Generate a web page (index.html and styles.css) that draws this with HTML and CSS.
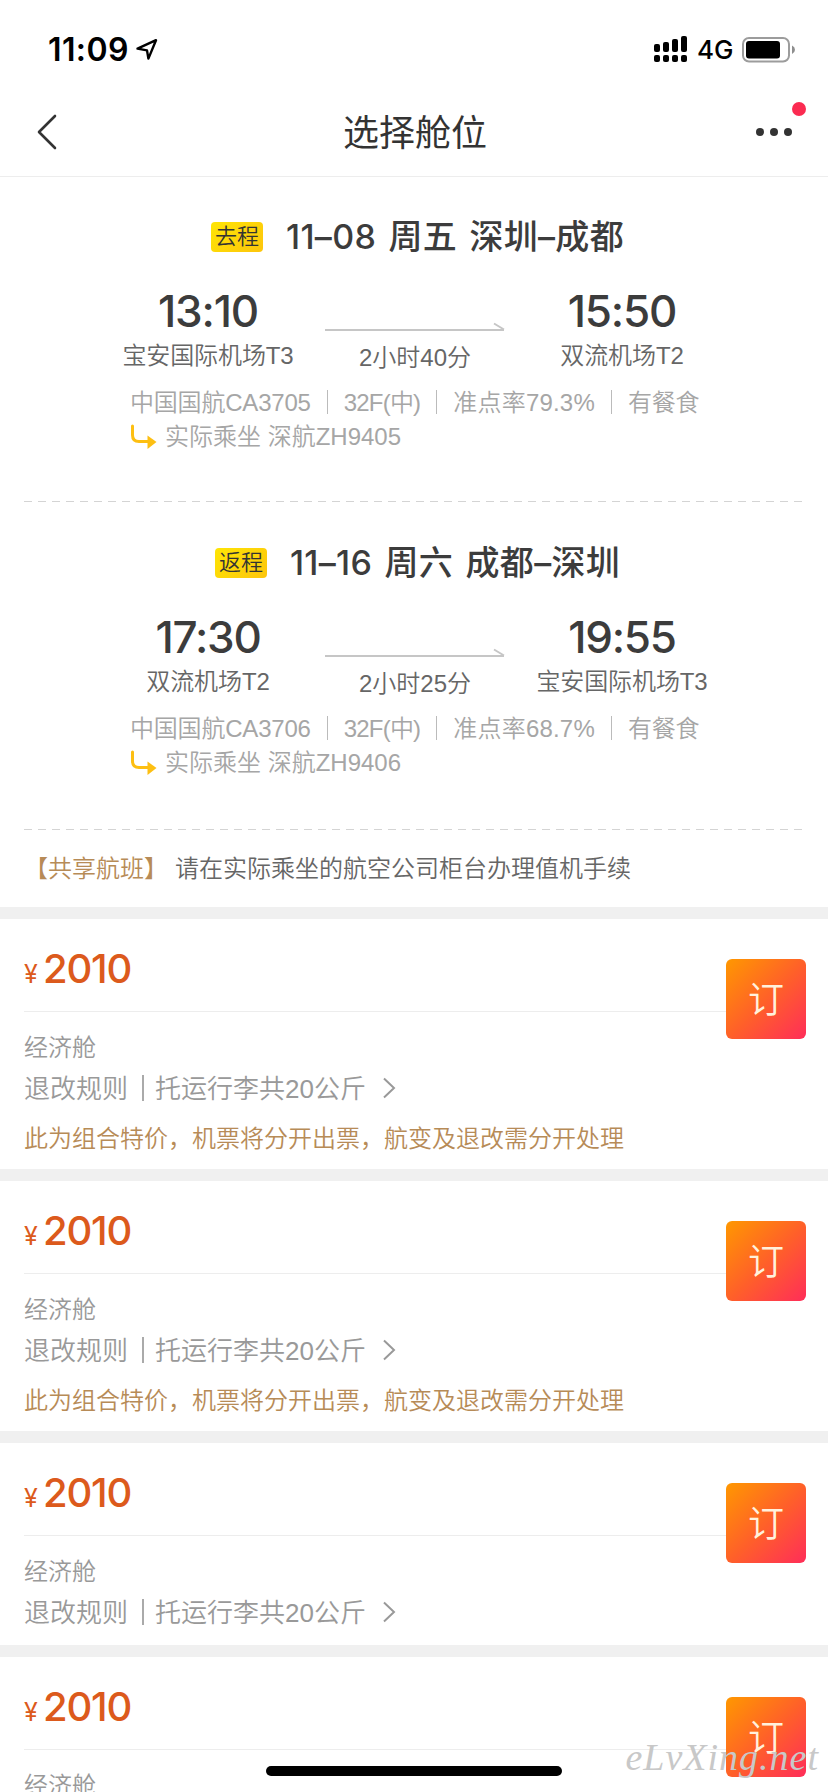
FILE: index.html
```
<!DOCTYPE html>
<html lang="zh-CN">
<head>
  <meta charset="UTF-8">
  <title>选择舱位</title>
  <link rel="stylesheet" href="styles.css">
</head>
<body>

  <div class="status-bar">
    <span class="clock">11:09</span>
    <svg class="location" width="24" height="24" viewBox="0 0 24 24">
      <path d="M2.5 10.6 L21 2.2 L13.4 20.6 L12 12.4 Z" fill="none" stroke="#000" stroke-width="2.4" stroke-linejoin="round"/>
    </svg>
    <div class="status-right">
      <svg width="34" height="27" viewBox="0 0 34 27">
        <rect x="0" y="8" width="6" height="8" rx="2"/>
        <rect x="9" y="6" width="6" height="10" rx="2"/>
        <rect x="18" y="3" width="6" height="13" rx="2"/>
        <rect x="27" y="0" width="6" height="16" rx="2"/>
        <rect x="0" y="19" width="6" height="7" rx="2"/>
        <rect x="9" y="19" width="6" height="7" rx="2"/>
        <rect x="18" y="19" width="6" height="7" rx="2"/>
        <rect x="27" y="19" width="6" height="7" rx="2"/>
      </svg>
      <span class="network">4G</span>
      <svg width="54" height="26" viewBox="0 0 54 26">
        <rect x="1" y="1" width="46" height="23.5" rx="6" fill="none" stroke="#9c9c9c" stroke-width="2"/>
        <rect x="4" y="4" width="34" height="17.5" rx="3"/>
        <path d="M50 8.5 Q53 10 53 12.7 Q53 15.5 50 17 Z" fill="#8e8e8e"/>
      </svg>
    </div>
  </div>

  <div class="nav">
    <svg class="back" width="22" height="36" viewBox="0 0 22 36">
      <path d="M19 2 L3 18 L19 34" fill="none" stroke="#333" stroke-width="2.6" stroke-linecap="round" stroke-linejoin="round"/>
    </svg>
    <h1>选择舱位</h1>
    <div class="more">
      <i></i><i></i><i></i>
      <span class="badge-dot"></span>
    </div>
  </div>

  <div class="flight">
    <div class="flight-title">
      <span class="tag">去程</span>
      <h2>11–08 周五 深圳–成都</h2>
    </div>
    <div class="route">
      <div class="stop">
        <div class="time">13:10</div>
        <div class="airport">宝安国际机场T3</div>
      </div>
      <div class="duration">
        <svg width="180" height="10" viewBox="0 0 180 10">
          <path d="M0 8 H179 M169 1.5 L179 7.5" fill="none" stroke="#c6c6c6" stroke-width="2"/>
        </svg>
        <span>2小时40分</span>
      </div>
      <div class="stop">
        <div class="time">15:50</div>
        <div class="airport">双流机场T2</div>
      </div>
    </div>
    <div class="info">
      <span>中国国航CA3705</span><i></i><span class="model">32F(中)</span><i></i><span class="rate">准点率79.3%</span><i></i><span>有餐食</span>
    </div>
    <div class="actual">
      <svg width="28" height="26" viewBox="0 0 28 26">
        <path d="M2.5 2 V11 Q2.5 17.5 9 17.5 H18" fill="none" stroke="#fdbf12" stroke-width="3" stroke-linecap="round"/>
        <path d="M17.5 11.5 L26.5 18 L17.5 25 Z" fill="#fdbf12"/>
      </svg>
      <span>实际乘坐 深航ZH9405</span>
    </div>
  </div>

  <div class="dashed"></div>

  <div class="flight return">
    <div class="flight-title">
      <span class="tag">返程</span>
      <h2>11–16 周六 成都–深圳</h2>
    </div>
    <div class="route">
      <div class="stop">
        <div class="time">17:30</div>
        <div class="airport">双流机场T2</div>
      </div>
      <div class="duration">
        <svg width="180" height="10" viewBox="0 0 180 10">
          <path d="M0 8 H179 M169 1.5 L179 7.5" fill="none" stroke="#c6c6c6" stroke-width="2"/>
        </svg>
        <span>2小时25分</span>
      </div>
      <div class="stop">
        <div class="time">19:55</div>
        <div class="airport">宝安国际机场T3</div>
      </div>
    </div>
    <div class="info">
      <span>中国国航CA3706</span><i></i><span class="model">32F(中)</span><i></i><span class="rate">准点率68.7%</span><i></i><span>有餐食</span>
    </div>
    <div class="actual">
      <svg width="28" height="26" viewBox="0 0 28 26">
        <path d="M2.5 2 V11 Q2.5 17.5 9 17.5 H18" fill="none" stroke="#fdbf12" stroke-width="3" stroke-linecap="round"/>
        <path d="M17.5 11.5 L26.5 18 L17.5 25 Z" fill="#fdbf12"/>
      </svg>
      <span>实际乘坐 深航ZH9406</span>
    </div>
  </div>

  <div class="dashed"></div>

  <div class="notice"><b>【共享航班】</b><span>请在实际乘坐的航空公司柜台办理值机手续</span></div>

  <div class="card">
    <div class="price"><small>¥</small>2010</div>
    <div class="cabin">经济舱</div>
    <div class="rules">
      <span>退改规则</span><i></i><span>托运行李共20公斤</span>
      <svg width="14" height="22" viewBox="0 0 14 22"><path d="M2 1.5 L12 11 L2 20.5" fill="none" stroke="#999" stroke-width="2"/></svg>
    </div>
    <div class="tip">此为组合特价，机票将分开出票，航变及退改需分开处理</div>
    <button class="book">订</button>
  </div>

  <div class="card">
    <div class="price"><small>¥</small>2010</div>
    <div class="cabin">经济舱</div>
    <div class="rules">
      <span>退改规则</span><i></i><span>托运行李共20公斤</span>
      <svg width="14" height="22" viewBox="0 0 14 22"><path d="M2 1.5 L12 11 L2 20.5" fill="none" stroke="#999" stroke-width="2"/></svg>
    </div>
    <div class="tip">此为组合特价，机票将分开出票，航变及退改需分开处理</div>
    <button class="book">订</button>
  </div>

  <div class="card">
    <div class="price"><small>¥</small>2010</div>
    <div class="cabin">经济舱</div>
    <div class="rules">
      <span>退改规则</span><i></i><span>托运行李共20公斤</span>
      <svg width="14" height="22" viewBox="0 0 14 22"><path d="M2 1.5 L12 11 L2 20.5" fill="none" stroke="#999" stroke-width="2"/></svg>
    </div>
    <button class="book">订</button>
  </div>

  <div class="card">
    <div class="price"><small>¥</small>2010</div>
    <div class="cabin">经济舱</div>
    <button class="book">订</button>
  </div>

  <div class="home-indicator"></div>
  <div class="watermark">eLvXing.net</div>

</body>
</html>
```
FILE: styles.css
```
* {
  box-sizing: border-box;
}

body {
  position: relative;
  margin: 0;
  width: 828px;
  height: 1792px;
  overflow: hidden;
  background: #fff;
  font-family: "Liberation Sans", "Noto Sans CJK SC", sans-serif;
  font-size: 24px;
  font-weight: 350;
  color: #666;
}

h1, h2 {
  margin: 0;
}

svg {
  display: block;
  flex: none;
}

/* status bar */
.status-bar {
  display: flex;
  align-items: center;
  height: 88px;
  padding: 11px 32px 0 48px;
  color: #000;
}

.clock {
  width: 87px;
  font-family: Inter, sans-serif;
  font-size: 32px;
  font-weight: 600;
  letter-spacing: 0.4px;
}

.status-right {
  display: flex;
  align-items: center;
  margin-left: auto;
}

.network {
  width: 45px;
  margin: 0 0 0 9px;
  font-family: Inter, sans-serif;
  font-size: 26px;
  font-weight: 500;
}

/* title bar */
.nav {
  display: flex;
  align-items: center;
  justify-content: space-between;
  height: 89px;
  padding: 0 36px;
  border-bottom: 1px solid #ededed;
}

.nav h1 {
  padding: 0 0 4px 16px;
  font-size: 36px;
  font-weight: 400;
  color: #333;
}

.more {
  position: relative;
  display: flex;
  gap: 6px;
}

.more i {
  width: 8px;
  height: 8px;
  border-radius: 50%;
  background: #333;
}

.badge-dot {
  position: absolute;
  top: -26px;
  right: -14px;
  width: 14px;
  height: 14px;
  border-radius: 50%;
  background: #fb2b51;
}

/* flight */
.flight {
  height: 324px;
  padding-top: 40px;
}

.flight.return {
  height: 327px;
  padding-top: 41px;
}

.flight-title {
  display: flex;
  justify-content: center;
  align-items: center;
  gap: 23px;
  height: 40px;
  padding-left: 7px;
}

.tag {
  width: 52px;
  height: 30px;
  border-radius: 4px;
  background: linear-gradient(135deg, #fee505, #fdc50c);
  color: #333;
  font-size: 22px;
  line-height: 29px;
  text-align: center;
}

.flight-title h2 {
  font-family: Inter, "Noto Sans CJK SC", sans-serif;
  font-size: 34px;
  font-weight: 500;
  line-height: 40px;
  letter-spacing: 0.3px;
  word-spacing: 3px;
  color: #3c3c3c;
}

.route {
  display: grid;
  grid-template-columns: 200px 180px 200px;
  column-gap: 17px;
  height: 123px;
  padding: 29px 0 0 108px;
}

.stop {
  text-align: center;
}

.time {
  font-family: Inter, sans-serif;
  font-size: 44px;
  font-weight: 500;
  line-height: 50px;
  letter-spacing: -1.2px;
  color: #3c3c3c;
}

.airport {
  margin-top: 5px;
  line-height: 30px;
  letter-spacing: -0.1px;
}

.duration {
  padding-top: 36px;
  text-align: center;
}

.duration span {
  display: block;
  margin-top: 11px;
  line-height: 30px;
}

.info {
  display: flex;
  align-items: center;
  height: 40px;
  padding-left: 130px;
  color: #a6a6a6;
  letter-spacing: -0.2px;
}

.info i {
  width: 1px;
  height: 24px;
  margin: 4px 16px 0;
  background: #bbb;
}

.info .model {
  letter-spacing: -0.8px;
}

.info .rate {
  letter-spacing: 0.2px;
}

.actual {
  display: flex;
  align-items: center;
  gap: 7px;
  height: 28px;
  padding-left: 130px;
  color: #a6a6a6;
}

.actual svg {
  margin-top: 5px;
}

.dashed {
  height: 1px;
  margin: 0 24px;
  background: repeating-linear-gradient(90deg, #d4d4d4 0, #d4d4d4 8px, transparent 8px, transparent 14px);
}

.notice {
  height: 77px;
  padding-left: 24px;
  line-height: 78px;
}

.notice b {
  margin-right: 7px;
  font-weight: 350;
  color: #b78b57;
}

/* cabin cards */
.card {
  position: relative;
  padding: 0 0 13px 24px;
  border-top: 12px solid #f0f0f0;
}

.price {
  height: 93px;
  margin-right: 102px;
  padding-top: 25px;
  border-bottom: 1px solid #ededed;
  font-family: Inter, sans-serif;
  font-size: 40px;
  font-weight: 500;
  line-height: 50px;
  letter-spacing: -1.2px;
  color: #dc5a1c;
}

.price small {
  display: inline-block;
  width: 19px;
  font-size: 25px;
  font-weight: 400;
}

.cabin {
  margin-top: 21px;
  line-height: 30px;
  color: #999;
}

.rules {
  display: flex;
  align-items: center;
  height: 40px;
  margin-top: 5px;
  font-size: 26px;
  color: #999;
}

.rules span {
  margin-top: -4px;
}

.rules i {
  width: 2px;
  height: 26px;
  margin: 0 11px 0 14px;
  background: #aaa;
}

.rules svg {
  margin-left: 16px;
}

.tip {
  height: 30px;
  margin: 16px 0 2px;
  line-height: 30px;
  color: #b78b57;
}

/* sits over the divider line */
.book {
  position: absolute;
  top: 40px;
  right: 22px;
  width: 80px;
  height: 80px;
  padding: 0 0 4px;
  border: none;
  border-radius: 6px;
  background: linear-gradient(135deg, #ff9800, #ff6128 50%, #ff2d59);
  color: #fff1dc;
  font-family: "Noto Sans CJK SC", sans-serif;
  font-size: 36px;
  font-weight: 350;
}

.home-indicator {
  position: absolute;
  left: 266px;
  bottom: 16px;
  width: 296px;
  height: 10px;
  border-radius: 5px;
  background: #000;
}

.watermark {
  position: absolute;
  right: 9px;
  bottom: 13px;
  font-family: "Liberation Serif", serif;
  font-size: 38px;
  font-style: italic;
  font-weight: 400;
  line-height: 44px;
  letter-spacing: 1px;
  color: #c8c8c8;
}
```
